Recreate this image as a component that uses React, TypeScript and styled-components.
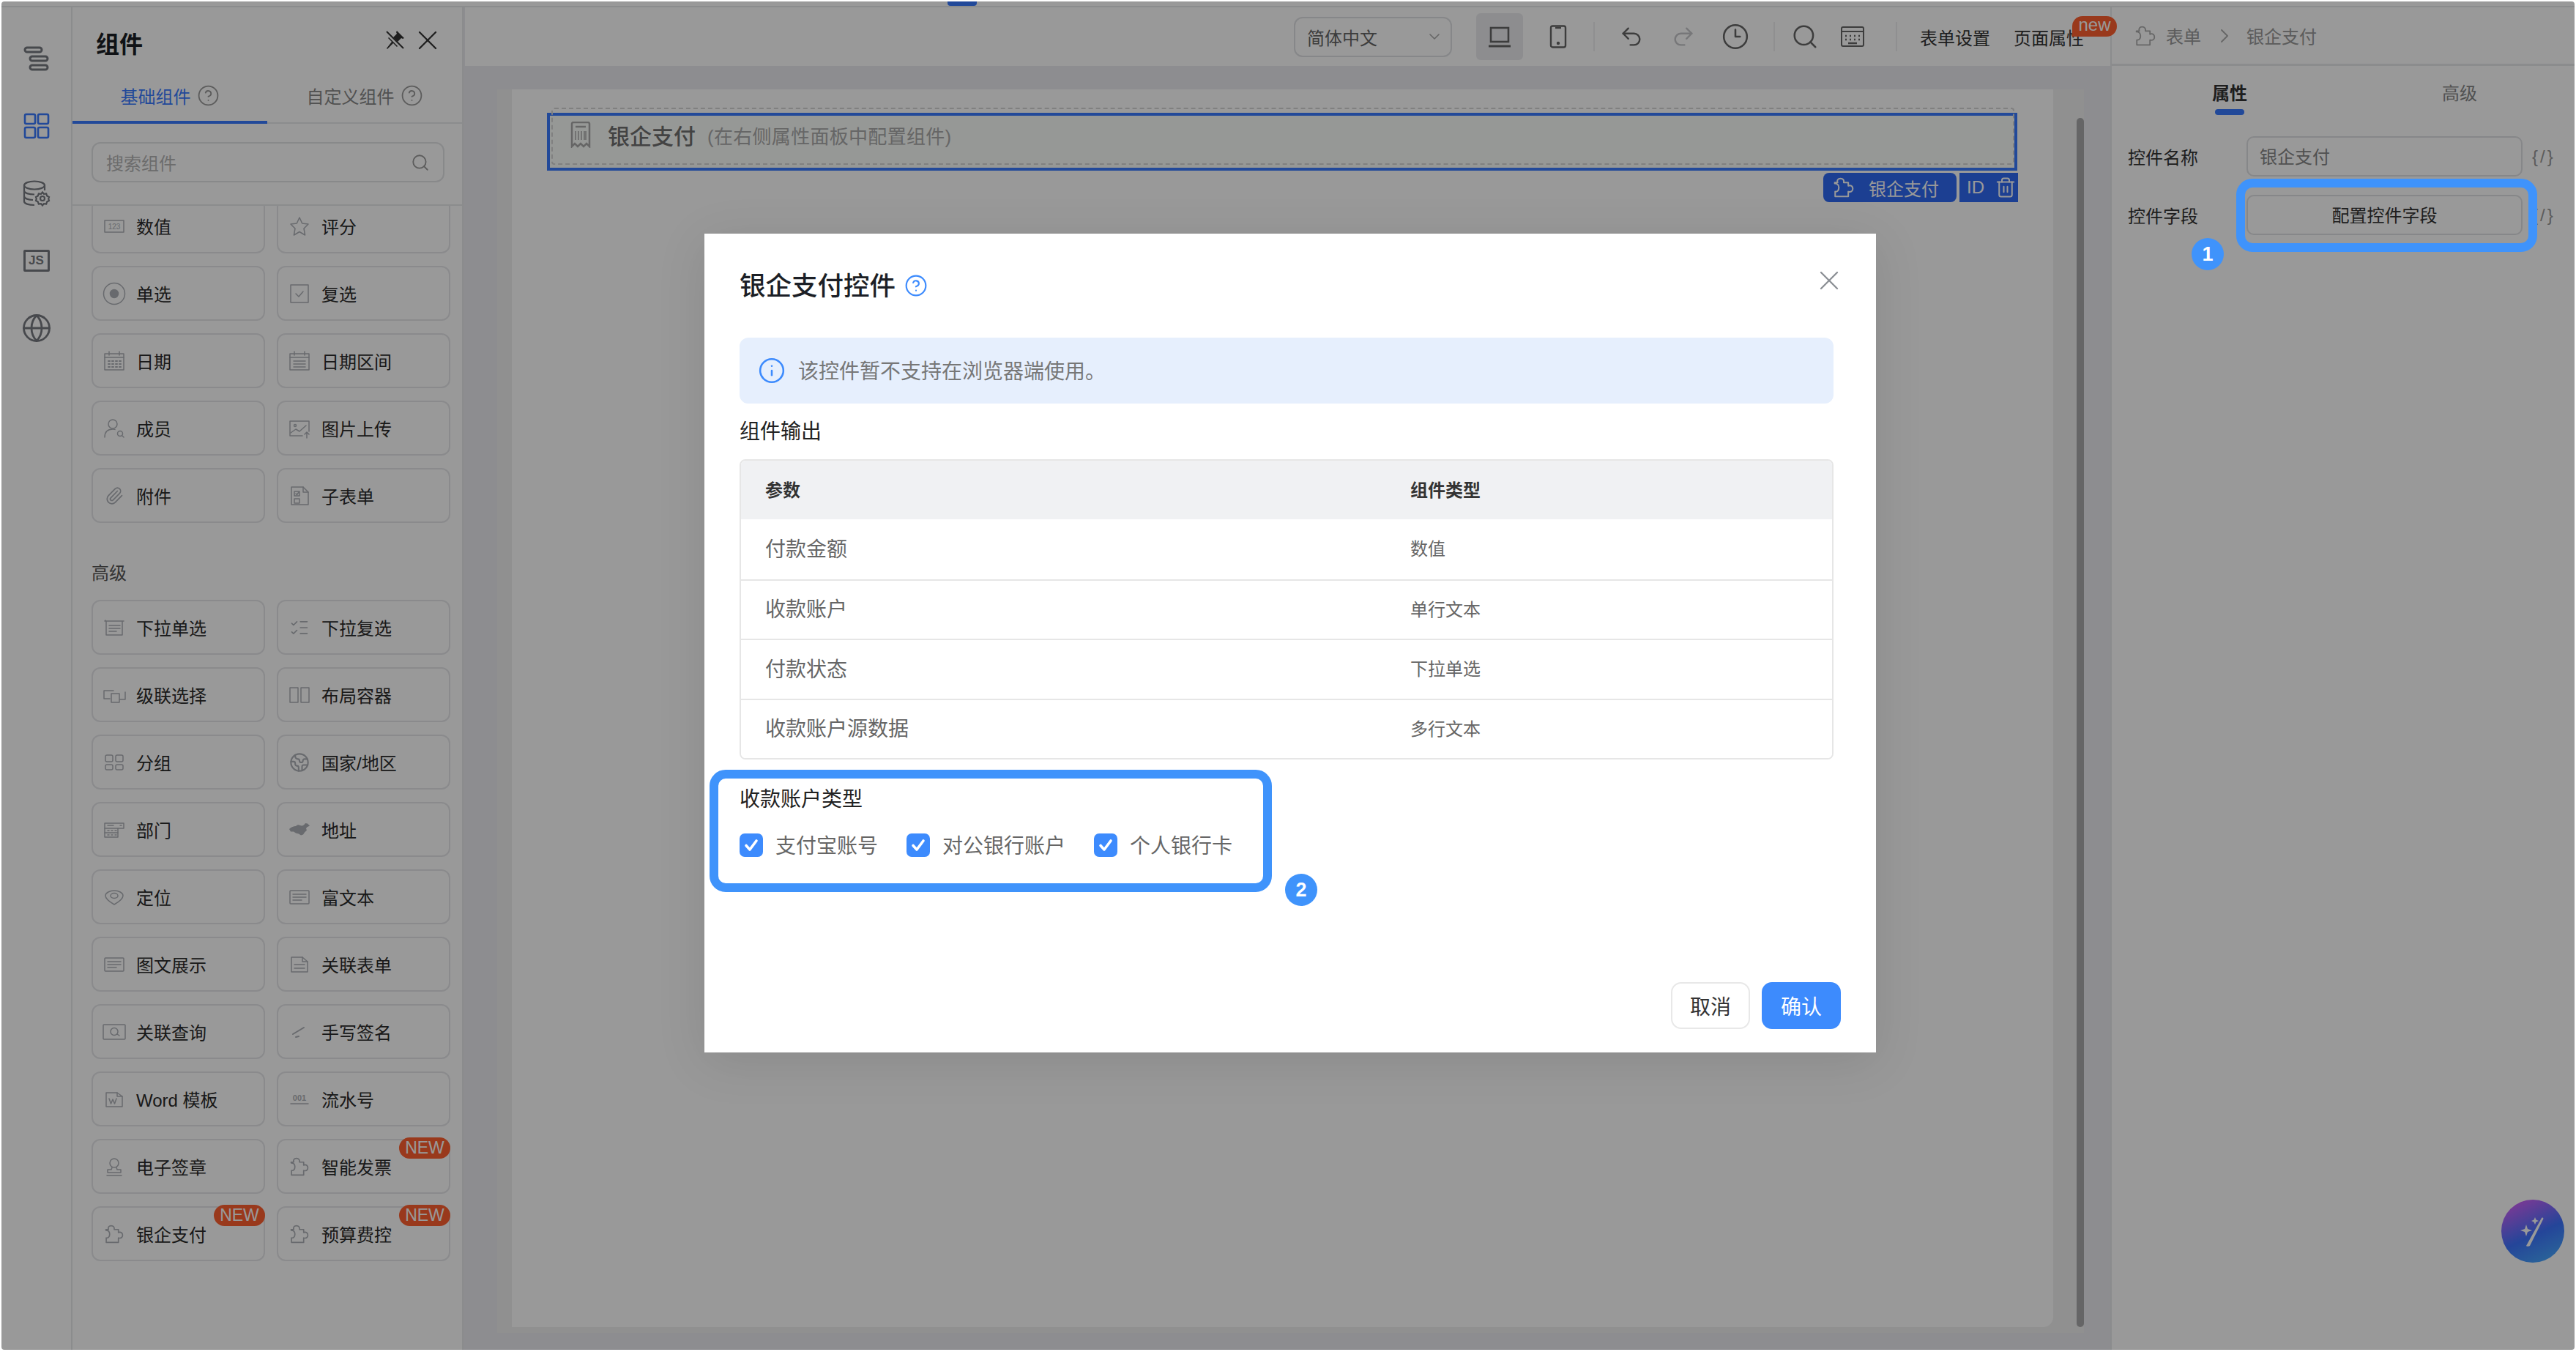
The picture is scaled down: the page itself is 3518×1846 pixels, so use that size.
import React from 'react';
import styled, { createGlobalStyle } from 'styled-components';
import {
  ChevronDown,
  ChevronRight,
  CircleHelp,
  Clock3,
  Earth,
  Globe,
  Info,
  ListChecks,
  Paperclip,
  Redo2,
  Search,
  Trash2,
  Undo2,
  X,
} from 'lucide-react';

const GlobalStyle = createGlobalStyle`
  html, body {
    margin: 0;
    padding: 0;
    background: #fff;
    overflow: hidden;
  }
  * {
    box-sizing: border-box;
  }
  body {
    font-family: "Liberation Sans", "Noto Sans CJK SC", sans-serif;
    color: #333;
  }
`;

const Page = styled.div`
  position: relative;
  width: 3518px;
  height: 1846px;
  padding: 2px 2px 3px 2px;
  overflow: hidden;
`;

const Frame = styled.div`
  display: flex;
  flex-direction: column;
  height: 100%;
  background: #fff;
`;

const TopStrip = styled.div`
  position: relative;
  flex: none;
  height: 8px;
  border-bottom: 2px solid #e8e9ec;
  display: flex;
  justify-content: flex-start;
`;

const StripTab = styled.div`
  width: 40px;
  height: 6px;
  margin-left: 1292px;
  border-radius: 0 0 4px 4px;
  background: #3a7aff;
`;

const Body = styled.div`
  flex: 1;
  min-height: 0;
  display: flex;
`;

/* left rail */
const Rail = styled.nav`
  flex: none;
  width: 97px;
  border-right: 2px solid #e8e9ec;
  display: flex;
  flex-direction: column;
  align-items: center;
  padding-top: 51px;
  gap: 54px;
  color: #6c6f75;
`;

const RailSlot = styled.div<{ $active?: boolean }>`
  width: 38px;
  height: 38px;
  display: flex;
  align-items: center;
  justify-content: center;
  color: ${(p) => (p.$active ? '#3a7aff' : '#777a80')};
`;

const JsBox = styled.div`
  flex: none;
  width: 36px;
  height: 30px;
  border: 3px solid #777a80;
  border-radius: 2px;
  font-size: 17px;
  font-weight: 700;
  line-height: 24px;
  text-align: center;
`;

/* components panel */
const Panel = styled.aside`
  flex: none;
  width: 534px;
  border-right: 2px solid #e8e9ec;
  display: flex;
  flex-direction: column;
  overflow: hidden;
`;

const PanelHead = styled.header`
  flex: none;
  height: 78px;
  display: flex;
  align-items: center;
  padding: 18px 25px 0 32px;
`;

const PanelTitle = styled.h2`
  margin: 0;
  flex: 1;
  font-size: 32px;
  font-weight: 700;
  color: #1c1f26;
`;

const HeadActions = styled.div`
  display: flex;
  align-items: center;
  gap: 9px;
  color: #333;
  margin-top: -6px;
`;

const PanelTabs = styled.div`
  flex: none;
  height: 81px;
  display: flex;
  padding-top: 7px;
  border-bottom: 2px solid #e8e9ec;
`;

const PanelTab = styled.div<{ $active?: boolean }>`
  flex: 0 0 266px;
  display: flex;
  align-items: center;
  justify-content: center;
  gap: 8px;
  margin-bottom: -2px;
  font-size: 24px;
  color: ${(p) => (p.$active ? '#3a7aff' : '#888')};
  border-bottom: 4px solid ${(p) => (p.$active ? '#3a7aff' : 'transparent')};
  svg {
    color: #999;
  }
`;

const SearchWrap = styled.div`
  flex: none;
  height: 112px;
  padding: 25px 24px 0 26px;
  border-bottom: 2px solid #e8e9ec;
`;

const SearchBox = styled.div`
  height: 55px;
  border: 2px solid #e3e4e7;
  border-radius: 12px;
  display: flex;
  align-items: center;
  justify-content: space-between;
  padding: 0 18px;
  font-size: 24px;
  color: #b5b5b5;
  svg {
    color: #999;
  }
`;

const PanelScroll = styled.div`
  flex: 1;
  min-height: 0;
  overflow: hidden;
  padding: 0 16px 0 26px;
`;

const ItemGrid = styled.div<{ $cropped?: boolean }>`
  display: grid;
  grid-template-columns: 237px 237px;
  grid-auto-rows: 75px;
  column-gap: 16px;
  row-gap: 17px;
  margin-top: ${(p) => (p.$cropped ? '-10px' : '0')};
`;

const SectionLabel = styled.div`
  font-size: 24px;
  line-height: 34px;
  color: #555;
  margin: 52px 0 19px;
`;

const Item = styled.div`
  position: relative;
  display: flex;
  align-items: center;
  border: 2px solid #e6e7ea;
  border-radius: 12px;
  padding-left: 15px;
  font-size: 24px;
  color: #2a2a2a;
  white-space: nowrap;
`;

const ItemIconSlot = styled.span`
  flex: none;
  width: 28px;
  height: 28px;
  margin-right: 16px;
  color: #aeb1b7;
  display: flex;
  align-items: center;
  justify-content: center;
`;

const NewBadge = styled.span`
  position: absolute;
  top: -4px;
  right: -2px;
  width: 70px;
  height: 29px;
  border-radius: 15px;
  background: #ff6030;
  color: #fff;
  font-size: 23px;
  line-height: 29px;
  text-align: center;
`;

const Glyph = styled.svg`
  width: 28px;
  height: 28px;
  fill: none;
  stroke: currentColor;
  stroke-width: 1.5;
  stroke-linecap: round;
  stroke-linejoin: round;
`;

/* center */
const Center = styled.main`
  flex: 1;
  min-width: 0;
  display: flex;
  flex-direction: column;
  background: #ebecf0;
  padding-left: 2px;
`;

const Toolbar = styled.div`
  flex: none;
  height: 80px;
  background: #fff;
  display: flex;
  align-items: center;
  justify-content: flex-end;
  padding-right: 36px;
`;

const LangSelect = styled.div`
  width: 216px;
  height: 55px;
  margin-right: 33px;
  border: 2px solid #e0e1e4;
  border-radius: 12px;
  display: flex;
  align-items: center;
  justify-content: space-between;
  padding: 0 10px 0 16px;
  font-size: 24px;
  color: #666;
  svg {
    color: #aaa;
  }
`;

const ToolGroup = styled.div<{ $gap: number }>`
  display: flex;
  align-items: center;
  gap: ${(p) => p.$gap}px;
`;

const ToolSlot = styled.div<{ $active?: boolean; $muted?: boolean }>`
  width: ${(p) => (p.$active ? '64px' : '40px')};
  height: 64px;
  border-radius: 6px;
  background: ${(p) => (p.$active ? '#ebecef' : 'transparent')};
  display: flex;
  align-items: center;
  justify-content: center;
  color: ${(p) => (p.$muted ? '#c6c7ca' : '#666')};
`;

const ToolSep = styled.div<{ $before: number; $after: number }>`
  width: 2px;
  height: 40px;
  margin: 0 ${(p) => p.$after}px 0 ${(p) => p.$before}px;
  background: #eeeef0;
`;

const ToolText = styled.span`
  position: relative;
  font-size: 24px;
  color: #333;
  white-space: nowrap;
  & + & {
    margin-left: 32px;
  }
`;

const TinyBadge = styled.span`
  position: absolute;
  top: -11px;
  left: 80px;
  width: 61px;
  height: 28px;
  border-radius: 14px 14px 14px 0;
  background: #ff6030;
  color: #fff;
  font-size: 24px;
  line-height: 24px;
  text-align: center;
`;

const Canvas = styled.div`
  position: relative;
  flex: 1;
  min-height: 0;
  padding: 32px 36px 0 44px;
`;

const Stage = styled.div`
  position: relative;
  height: 1698px;
  background: #f0f0f0;
  padding: 0 42px 8px 20px;
`;

const Sheet = styled.div`
  height: 100%;
  background: #fff;
  border-radius: 0 0 14px 0;
  padding: 32px 49px 0 48px;
`;

const Scrollbar = styled.div`
  position: absolute;
  top: 39px;
  right: 0;
  bottom: 8px;
  width: 10px;
  border-radius: 5px;
  background: #a9a9ab;
`;

const FieldBox = styled.div`
  position: relative;
  height: 79px;
  border: 4px solid #3a7aff;
  background: #fafdfa;
  display: flex;
  align-items: center;
  padding: 0 0 19px 28px;
  &::before {
    content: '';
    position: absolute;
    top: -11px;
    left: 2px;
    right: 0;
    bottom: 4px;
    border: 2px dashed #d6d6d6;
    border-radius: 4px;
    pointer-events: none;
  }
`;

const FieldTitle = styled.span`
  margin-left: 23px;
  font-size: 30px;
  font-weight: 500;
  color: #717171;
`;

const FieldHint = styled.span`
  margin-left: 16px;
  font-size: 26px;
  letter-spacing: 0.3px;
  color: #aaa;
`;

const FieldTags = styled.div`
  position: absolute;
  top: calc(100% + 7px);
  right: -5px;
  display: flex;
  gap: 4px;
`;

const FieldTag = styled.div<{ $rounded?: boolean }>`
  width: ${(p) => (p.$rounded ? '182px' : '80px')};
  height: 40px;
  padding-left: ${(p) => (p.$rounded ? '14px' : '10px')};
  display: flex;
  align-items: center;
  gap: ${(p) => (p.$rounded ? '20px' : '14px')};
  background: #2f69f3;
  border-radius: ${(p) => (p.$rounded ? '8px' : '0')};
  color: #fff;
  font-size: 24px;
`;

/* right panel */
const Inspector = styled.aside`
  flex: none;
  width: 634px;
  border-left: 2px solid #e8e9ec;
  display: flex;
  flex-direction: column;
`;

const Crumbs = styled.div`
  flex: none;
  height: 80px;
  border-bottom: 3px solid #e8e9ec;
  display: flex;
  align-items: center;
  padding-left: 32px;
  font-size: 24px;
  color: #999;
  svg {
    color: #aaa;
  }
`;

const CrumbText = styled.span<{ $gap: number }>`
  margin-left: ${(p) => p.$gap}px;
  margin-right: ${(p) => p.$gap + 2}px;
  &:last-child {
    margin-right: 0;
  }
`;

const InspectorTabs = styled.div`
  flex: none;
  height: 74px;
  display: flex;
  padding-left: 4px;
`;

const InspectorTab = styled.div<{ $active?: boolean }>`
  flex: 1;
  display: flex;
  flex-direction: column;
  align-items: center;
  padding-top: 23px;
  font-size: 24px;
  line-height: 30px;
  font-weight: ${(p) => (p.$active ? 700 : 400)};
  color: ${(p) => (p.$active ? '#333' : '#888')};
  &::after {
    content: '';
    display: ${(p) => (p.$active ? 'block' : 'none')};
    width: 40px;
    height: 8px;
    margin-top: 6px;
    border-radius: 4px;
    background: #3a7aff;
  }
`;

const PropList = styled.div`
  display: flex;
  flex-direction: column;
  gap: 25px;
  padding: 22px 0 0 22px;
`;

const PropRow = styled.div`
  display: flex;
  align-items: center;
  font-size: 24px;
  color: #333;
`;

const PropLabel = styled.span`
  flex: none;
  width: 162px;
`;

const PropInput = styled.div<{ $button?: boolean }>`
  width: 377px;
  height: 55px;
  border: 2px solid #e0e1e4;
  border-radius: 10px;
  display: flex;
  align-items: center;
  justify-content: ${(p) => (p.$button ? 'center' : 'flex-start')};
  padding: 0 0 2px ${(p) => (p.$button ? '0' : '16px')};
  color: ${(p) => (p.$button ? '#333' : '#888')};
`;

const CodeMark = styled.span`
  margin-left: 13px;
  color: #999;
  letter-spacing: 3px;
`;

const AiButton = styled.div`
  position: absolute;
  right: 16px;
  bottom: 122px;
  width: 86px;
  height: 86px;
  border-radius: 50%;
  background: linear-gradient(155deg, #d05ff8 8%, #3d74ff 55%, #49b4ff 100%);
  display: flex;
  align-items: center;
  justify-content: center;
`;

/* modal */
const Overlay = styled.div`
  position: absolute;
  inset: 2px 2px 3px 2px;
  border-radius: 4px;
  background: rgba(0, 0, 0, 0.4);
  padding: 317px 0 0 960px;
`;

const Modal = styled.section`
  width: 1600px;
  height: 1118px;
  background: #fff;
  padding: 48px 58px 32px 48px;
  display: flex;
  flex-direction: column;
  position: relative;
  box-shadow: 0 12px 64px rgba(0, 0, 0, 0.1);
`;

const ModalTitle = styled.h3`
  margin: 0;
  height: 44px;
  display: flex;
  align-items: center;
  gap: 12px;
  padding-bottom: 3px;
  font-size: 35.5px;
  font-weight: 500;
  color: #1c1f26;
  svg {
    color: #3d8bfd;
    margin-top: 5px;
  }
`;

const ModalClose = styled.button`
  position: absolute;
  top: 42px;
  right: 42px;
  padding: 0;
  border: 0;
  background: none;
  color: #8b8f94;
  display: flex;
`;

const Alert = styled.div`
  flex: none;
  height: 90px;
  margin-top: 50px;
  padding: 0 0 3px 25px;
  border-radius: 12px;
  background: #e6effd;
  display: flex;
  align-items: center;
  gap: 17px;
  font-size: 28px;
  color: #777;
  svg {
    color: #3d8bfd;
    margin-top: 3px;
  }
`;

const ModalLabel = styled.div<{ $top: number }>`
  height: 40px;
  margin-top: ${(p) => p.$top}px;
  font-size: 28px;
  line-height: 40px;
  color: #222;
`;

const Table = styled.div`
  margin-top: 17px;
  border: 2px solid #e6e6e6;
  border-radius: 8px;
  overflow: hidden;
`;

const TableRow = styled.div<{ $head?: boolean }>`
  height: ${(p) => (p.$head ? '80px' : '81.5px')};
  display: grid;
  grid-template-columns: 881px 1fr;
  align-items: center;
  padding: 0 0 4px 33px;
  background: ${(p) => (p.$head ? '#f0f1f3' : '#fff')};
  border-top: ${(p) => (p.$head ? '0' : '2px solid #e6e6e6')};
  &:nth-child(2) {
    border-top: 0;
  }
`;

const Cell = styled.span<{ $type?: boolean; $head?: boolean }>`
  font-size: ${(p) => (p.$type || p.$head ? '24px' : '28px')};
  font-weight: ${(p) => (p.$head ? 600 : 400)};
  color: ${(p) => (p.$head ? '#333' : '#666')};
`;

const CheckRow = styled.div`
  display: flex;
  gap: 39px;
  margin-top: 26px;
`;

const CheckOption = styled.label`
  display: flex;
  align-items: center;
  gap: 17px;
  height: 32px;
  font-size: 28px;
  color: #666;
  & > span:last-child {
    margin-top: -3px;
  }
`;

const CheckBox = styled.span`
  width: 32px;
  height: 32px;
  border-radius: 7px;
  background: #3d8bfd;
  display: flex;
  align-items: center;
  justify-content: center;
`;

const ModalFooter = styled.footer`
  margin: auto -10px 0 0;
  display: flex;
  justify-content: flex-end;
  gap: 16px;
`;

const ModalButton = styled.button<{ $primary?: boolean }>`
  width: 108px;
  height: 64px;
  padding: 0;
  border-radius: 14px;
  border: 2px solid ${(p) => (p.$primary ? '#3d8bfd' : '#e8e8e8')};
  background: ${(p) => (p.$primary ? '#3d8bfd' : '#fff')};
  color: ${(p) => (p.$primary ? '#fff' : '#333')};
  font-family: inherit;
  font-size: 28px;
`;

/* marks drawn over the screenshot */
const MarkBox = styled.div<{ $x: number; $y: number; $w: number; $h: number }>`
  position: absolute;
  left: ${(p) => p.$x}px;
  top: ${(p) => p.$y}px;
  width: ${(p) => p.$w}px;
  height: ${(p) => p.$h}px;
  border: 12px solid #3f93fb;
  border-radius: 22px;
`;

const MarkDot = styled.div<{ $x: number; $y: number }>`
  position: absolute;
  left: ${(p) => p.$x - 22}px;
  top: ${(p) => p.$y - 22}px;
  width: 44px;
  height: 44px;
  border-radius: 50%;
  background: #3f93fb;
  color: #fff;
  font-size: 27px;
  font-weight: 700;
  line-height: 44px;
  text-align: center;
`;

const PuzzleIcon = ({ size = 26, width = 1.6 }: { size?: number; width?: number }) => (
  <svg width={size} height={size} viewBox="0 0 25 24" fill="none" stroke="currentColor" strokeWidth={width} strokeLinejoin="round">
    <path d="M1.500 6H5C4 3 5.500 1 8.500 1S13 3 12.500 6H18V10C21 8.500 23.500 10.500 23.500 13.500S21 18 18 17V23H2V17C5 17.500 6.500 15 6.500 12S4.500 7 1.500 7Z" />
  </svg>
);

const TreeIcon = () => (
  <svg width="36" height="34" viewBox="0 0 36 34" fill="none" stroke="currentColor" strokeWidth="3">
    <rect x="2" y="2" width="23" height="6" rx="3" />
    <rect x="9" y="14" width="24" height="6" rx="3" />
    <rect x="9" y="26" width="24" height="6" rx="3" />
  </svg>
);

const GridIcon = () => (
  <svg width="36" height="36" viewBox="0 0 36 36" fill="none" stroke="currentColor" strokeWidth="2.6">
    <rect x="2" y="2" width="14" height="13" rx="2" />
    <rect x="20" y="2" width="14" height="13" rx="2" />
    <rect x="2" y="20" width="14" height="14" rx="2" />
    <rect x="20" y="20" width="14" height="14" rx="2" />
  </svg>
);

const DataIcon = () => (
  <svg width="38" height="36" viewBox="0 0 38 36" fill="none" stroke="currentColor" strokeWidth="2.2">
    <ellipse cx="16" cy="7" rx="14" ry="5.5" />
    <path d="M2 7v22c0 3 6 5 14 5" />
    <path d="M30 7v7" />
    <path d="M2 14.5c0 3 6 5 14 5" />
    <path d="M2 22c0 3 6 5 12 5" />
    <circle cx="27" cy="25" r="3" />
    <path d="M27 16.5l2 2.4 3.2-.4 1 3 2.8 1.500-.8 2.500.8 2.500-2.800 1.500-1 3-3.200-.4-2 2.400-2-2.400-3.200.4-1-3-2.800-1.500.8-2.500-.8-2.500 2.800-1.500 1-3 3.200.4z" />
  </svg>
);

const PinOffIcon = () => (
  <svg width="28" height="28" viewBox="0 0 28 28">
    <path d="M17 1l10 10-2 1-2-1-5 5 1 5-2 2-5-5-8 8-1-1 7-9-5-5 2-2 5 1 5-5-1-2z" fill="currentColor" />
    <path d="M2 3l23 23" stroke="#fff" strokeWidth="4" />
    <path d="M3 2l23 23" stroke="currentColor" strokeWidth="2" />
  </svg>
);

const LaptopIcon = () => (
  <svg width="32" height="32" viewBox="0 0 32 32" fill="none" stroke="currentColor" strokeWidth="2.6">
    <rect x="4" y="4" width="24" height="19" />
    <path d="M1 29h30" strokeWidth="3" />
  </svg>
);

const PhoneIcon = () => (
  <svg width="24" height="32" viewBox="0 0 24 32" fill="none" stroke="currentColor" strokeWidth="2.400">
    <rect x="2" y="1.500" width="20" height="29" rx="2.500" />
    <circle cx="12" cy="25" r="1" fill="currentColor" />
    <path d="M8 4h8" />
  </svg>
);

const KeyboardIcon = () => (
  <svg width="32" height="28" viewBox="0 0 32 28" fill="none" stroke="currentColor" strokeWidth="2">
    <rect x="1" y="1" width="30" height="26" rx="2" />
    <path d="M1 7h30" />
    <path d="M6 13h2M12 13h2M18 13h2M24 13h2M6 18h2M12 18h2M18 18h2M24 18h2M10 23h12" strokeWidth="2.400" />
  </svg>
);

const ReceiptIcon = () => (
  <svg width="28" height="36" viewBox="0 0 28 36" fill="none" stroke="#aaa" strokeWidth="2.500">
    <path d="M2 3c0-1 1-2 2-2h20c1 0 2 1 2 2v31l-4-4-4 4-4-4-4 4-4-4-4 4z" />
    <path d="M7 7h14" />
    <path d="M7 13v12M11 13v12M15 13v12M19 13v12M21 13v12" strokeWidth="1.500" />
  </svg>
);

const WandIcon = () => (
  <svg width="48" height="48" viewBox="0 0 48 48" fill="#fff">
    <path d="M36 6c2-1 3 0 2 2L20 44c-1 1-5 1-5 0z" />
    <path d="M15 15l2 6 6 2-6 2-2 6-2-6-6-2 6-2z" />
    <path d="M27 5l1.500 3.500 3.500 1.500-3.500 1.500L27 15l-1.500-3.500L22 10l3.500-1.500z" />
  </svg>
);

const CheckMark = () => (
  <svg width="22" height="22" viewBox="0 0 22 22" fill="none" stroke="#fff" strokeWidth="3.600" strokeLinecap="round" strokeLinejoin="round">
    <path d="M4 11.500l5 5.500 9-12" />
  </svg>
);

const itemIcons: Record<string, React.ReactNode> = {
  num: (
    <Glyph viewBox="0 0 28 28">
      <rect x="1" y="6" width="26" height="16" />
      <text x="14" y="18" fontSize="10" textAnchor="middle" fill="currentColor" stroke="none">123</text>
    </Glyph>
  ),
  star: (
    <Glyph viewBox="0 0 28 28">
      <path d="M14 2l3.700 8 8.300 1-6 6 1.600 9L14 21.500 6.400 26 8 17l-6-6 8.300-1z" />
    </Glyph>
  ),
  radio: (
    <Glyph viewBox="0 0 32 32" style={{ width: 32, height: 32, flex: 'none' }}>
      <circle cx="16" cy="16" r="14.500" />
      <circle cx="16" cy="16" r="5.500" fill="currentColor" />
    </Glyph>
  ),
  check: (
    <Glyph viewBox="0 0 28 28">
      <rect x="2" y="2" width="24" height="24" />
      <path d="M9 14l4 4 6-7" />
    </Glyph>
  ),
  date: (
    <Glyph viewBox="0 0 28 28">
      <rect x="1" y="4" width="26" height="22" />
      <path d="M1 9h26M7 1v5M21 1v5" />
      <path d="M6 14h2M11 14h2M16 14h2M21 14h2M6 18h2M11 18h2M16 18h2M21 18h2M6 22h2M11 22h2M16 22h2M21 22h2" strokeWidth="2" />
    </Glyph>
  ),
  range: (
    <Glyph viewBox="0 0 28 28">
      <rect x="1" y="4" width="26" height="22" />
      <path d="M7 1v5M21 1v5M1 9h26M6 14h16M6 18h16M6 22h16" />
    </Glyph>
  ),
  member: (
    <Glyph viewBox="0 0 28 28">
      <circle cx="12" cy="8" r="6" />
      <path d="M1 26c0-7 4-11 11-11 1 0 2 0 3 .4" />
      <circle cx="22" cy="21" r="3.500" />
      <path d="M25 24l2 2" />
    </Glyph>
  ),
  image: (
    <Glyph viewBox="0 0 28 28">
      <path d="M18 24H1V4h26v14" />
      <circle cx="8" cy="10" r="1.500" />
      <path d="M2 20l7-5 5 3 9-8" />
      <path d="M24 27v-7M21 22l3-3 3 3" />
    </Glyph>
  ),
  attach: <Paperclip size={26} strokeWidth={1.6} />,
  sub: (
    <Glyph viewBox="0 0 28 28">
      <path d="M3 2h16l7 7v17H3z" />
      <path d="M19 2v7h7" />
      <path d="M7 8h7v6H7zM7 18h7v6H7z" />
      <path d="M9 11l1.500 1.500L13 9" />
    </Glyph>
  ),
  select: (
    <Glyph viewBox="0 0 28 28">
      <path d="M1 5h26M3 5v19h22V5M1 5l1-1M7 11h15M7 15h15M7 19h10" />
    </Glyph>
  ),
  multi: <ListChecks size={28} strokeWidth={1.4} />,
  cascade: (
    <Glyph viewBox="0 0 32 28" style={{ width: 32, flex: 'none' }}>
      <path d="M10 19H2V8h13" />
      <path d="M12 24V12h11v12zM23 20h8V10" />
    </Glyph>
  ),
  layout: (
    <Glyph viewBox="0 0 28 28">
      <rect x="1" y="4" width="11" height="20" />
      <rect x="16" y="4" width="11" height="20" />
    </Glyph>
  ),
  group: (
    <Glyph viewBox="0 0 28 28">
      <rect x="2" y="4" width="10" height="9" rx="2" />
      <rect x="16" y="4" width="10" height="9" rx="2" />
      <rect x="2" y="17" width="10" height="7" rx="2" />
      <rect x="16" y="17" width="10" height="7" rx="2" />
    </Glyph>
  ),
  earth: <Earth size={30} strokeWidth={1.8} />,
  dept: (
    <Glyph viewBox="0 0 28 28">
      <path d="M1 5h26v7h-8v12H1z" />
      <path d="M1 12h18M1 18h18M5 8h8M5 15h2M10 15h2M15 15h2M5 21h2M10 21h2M15 21h2M22 8h2" />
    </Glyph>
  ),
  address: (
    <svg width="30" height="28" viewBox="0 0 30 28" fill="currentColor" style={{ flex: 'none' }}>
      <path d="M1 13c3-3 6-4 9-4 2-2 4-2 6-1 3 1 5 0 7-3l3 .5 3 3-4 2-1 2 1 2-3 3-2 3-3 1-3-2-4-1-3-2-4 0z" />
    </svg>
  ),
  location: (
    <Glyph viewBox="0 0 28 28">
      <path d="M14 24C7 20 2 16 2 12c0-4 6-7 12-7s12 3 12 7c0 4-5 8-12 12z" />
      <ellipse cx="14" cy="12" rx="5" ry="3.500" />
    </Glyph>
  ),
  rich: (
    <Glyph viewBox="0 0 28 28">
      <rect x="1" y="5" width="26" height="18" rx="1" />
      <path d="M5 10h18M5 14h18M5 18h12" />
    </Glyph>
  ),
  link: (
    <Glyph viewBox="0 0 28 28">
      <path d="M3 4h15l7 6v14H3z" />
      <path d="M18 4v6h7M7 14h14M7 19h14" />
    </Glyph>
  ),
  query: (
    <Glyph viewBox="0 0 32 28" style={{ width: 32, flex: 'none' }} strokeWidth="2.200">
      <rect x="1" y="4" width="30" height="20" rx="1" />
      <circle cx="16" cy="13.500" r="5" />
      <path d="M20 17l3 2" />
    </Glyph>
  ),
  sign: (
    <Glyph viewBox="0 0 28 28">
      <path d="M5 17L20 8M9 21l4-1" strokeWidth="2" />
    </Glyph>
  ),
  word: (
    <Glyph viewBox="0 0 28 28">
      <path d="M3 5h15l7 5v14H3z" />
      <path d="M18 5v5h7" />
      <path d="M7 13l2.500 7L12 14l2.500 6L17 13" />
    </Glyph>
  ),
  serial: (
    <Glyph viewBox="0 0 28 28">
      <text x="14" y="16" fontSize="11" fontWeight="700" textAnchor="middle" fill="currentColor" stroke="none">001</text>
      <path d="M2 20h24" />
    </Glyph>
  ),
  seal: (
    <Glyph viewBox="0 0 28 28">
      <circle cx="14" cy="9" r="6" />
      <path d="M11 15l-1 3H5v4h18v-4h-5l-1-3M4 26h20" />
    </Glyph>
  ),
  puzzle: <PuzzleIcon />,
};

type ItemDef = { label: string; icon: string; isNew?: boolean };

const basicItems: ItemDef[] = [
  { label: '数值', icon: 'num' },
  { label: '评分', icon: 'star' },
  { label: '单选', icon: 'radio' },
  { label: '复选', icon: 'check' },
  { label: '日期', icon: 'date' },
  { label: '日期区间', icon: 'range' },
  { label: '成员', icon: 'member' },
  { label: '图片上传', icon: 'image' },
  { label: '附件', icon: 'attach' },
  { label: '子表单', icon: 'sub' },
];

const advancedItems: ItemDef[] = [
  { label: '下拉单选', icon: 'select' },
  { label: '下拉复选', icon: 'multi' },
  { label: '级联选择', icon: 'cascade' },
  { label: '布局容器', icon: 'layout' },
  { label: '分组', icon: 'group' },
  { label: '国家/地区', icon: 'earth' },
  { label: '部门', icon: 'dept' },
  { label: '地址', icon: 'address' },
  { label: '定位', icon: 'location' },
  { label: '富文本', icon: 'rich' },
  { label: '图文展示', icon: 'rich' },
  { label: '关联表单', icon: 'link' },
  { label: '关联查询', icon: 'query' },
  { label: '手写签名', icon: 'sign' },
  { label: 'Word 模板', icon: 'word' },
  { label: '流水号', icon: 'serial' },
  { label: '电子签章', icon: 'seal' },
  { label: '智能发票', icon: 'puzzle', isNew: true },
  { label: '银企支付', icon: 'puzzle', isNew: true },
  { label: '预算费控', icon: 'puzzle', isNew: true },
];

const outputs = [
  ['付款金额', '数值'],
  ['收款账户', '单行文本'],
  ['付款状态', '下拉单选'],
  ['收款账户源数据', '多行文本'],
];

const accountTypes = ['支付宝账号', '对公银行账户', '个人银行卡'];

const renderItem = (item: ItemDef) => (
  <Item key={item.label}>
    <ItemIconSlot>{itemIcons[item.icon]}</ItemIconSlot>
    {item.label}
    {item.isNew && <NewBadge>NEW</NewBadge>}
  </Item>
);

const App: React.FC = () => (
  <Page>
    <GlobalStyle />
    <Frame>
      <TopStrip>
        <StripTab />
      </TopStrip>
      <Body>
        <Rail>
          <RailSlot><TreeIcon /></RailSlot>
          <RailSlot $active><GridIcon /></RailSlot>
          <RailSlot><DataIcon /></RailSlot>
          <RailSlot><JsBox>JS</JsBox></RailSlot>
          <RailSlot><Globe size={42} strokeWidth={1.6} style={{ flex: 'none' }} /></RailSlot>
        </Rail>

        <Panel>
          <PanelHead>
            <PanelTitle>组件</PanelTitle>
            <HeadActions>
              <PinOffIcon />
              <X size={44} strokeWidth={1.3} />
            </HeadActions>
          </PanelHead>
          <PanelTabs>
            <PanelTab $active>基础组件 <CircleHelp size={31} strokeWidth={1.4} /></PanelTab>
            <PanelTab>自定义组件 <CircleHelp size={31} strokeWidth={1.4} /></PanelTab>
          </PanelTabs>
          <SearchWrap>
            <SearchBox>
              搜索组件
              <Search size={26} strokeWidth={1.7} />
            </SearchBox>
          </SearchWrap>
          <PanelScroll>
            <ItemGrid $cropped>{basicItems.map(renderItem)}</ItemGrid>
            <SectionLabel>高级</SectionLabel>
            <ItemGrid>{advancedItems.map(renderItem)}</ItemGrid>
          </PanelScroll>
        </Panel>

        <Center>
          <Toolbar>
            <LangSelect>
              简体中文
              <ChevronDown size={24} strokeWidth={1.6} />
            </LangSelect>
            <ToolGroup $gap={28}>
              <ToolSlot $active><LaptopIcon /></ToolSlot>
              <ToolSlot><PhoneIcon /></ToolSlot>
            </ToolGroup>
            <ToolSep $before={28} $after={30} />
            <ToolGroup $gap={31}>
              <ToolSlot><Undo2 size={34} strokeWidth={1.7} /></ToolSlot>
              <ToolSlot $muted><Redo2 size={34} strokeWidth={1.7} /></ToolSlot>
              <ToolSlot><Clock3 size={38} strokeWidth={1.6} style={{ flex: 'none' }} /></ToolSlot>
            </ToolGroup>
            <ToolSep $before={32} $after={21} />
            <ToolGroup $gap={25}>
              <ToolSlot><Search size={38} strokeWidth={1.6} style={{ flex: 'none' }} /></ToolSlot>
              <ToolSlot><KeyboardIcon /></ToolSlot>
            </ToolGroup>
            <ToolSep $before={39} $after={31} />
            <ToolText>表单设置</ToolText>
            <ToolText>
              页面属性
              <TinyBadge>new</TinyBadge>
            </ToolText>
          </Toolbar>
          <Canvas>
            <Stage>
              <Sheet>
                <FieldBox>
                  <ReceiptIcon />
                  <FieldTitle>银企支付</FieldTitle>
                  <FieldHint>(在右侧属性面板中配置组件)</FieldHint>
                  <FieldTags>
                    <FieldTag $rounded>
                      <PuzzleIcon size={28} width={1.8} />
                      银企支付
                    </FieldTag>
                    <FieldTag>
                      ID
                      <Trash2 size={30} strokeWidth={1.6} />
                    </FieldTag>
                  </FieldTags>
                </FieldBox>
              </Sheet>
              <Scrollbar />
            </Stage>
          </Canvas>
        </Center>

        <Inspector>
          <Crumbs>
            <PuzzleIcon size={28} />
            <CrumbText $gap={14}>表单</CrumbText>
            <ChevronRight size={32} strokeWidth={1.4} />
            <CrumbText $gap={14}>银企支付</CrumbText>
          </Crumbs>
          <InspectorTabs>
            <InspectorTab $active>属性</InspectorTab>
            <InspectorTab>高级</InspectorTab>
          </InspectorTabs>
          <PropList>
            <PropRow>
              <PropLabel>控件名称</PropLabel>
              <PropInput>银企支付</PropInput>
              <CodeMark>{'{/}'}</CodeMark>
            </PropRow>
            <PropRow>
              <PropLabel>控件字段</PropLabel>
              <PropInput $button>配置控件字段</PropInput>
              <CodeMark>{'{/}'}</CodeMark>
            </PropRow>
          </PropList>
        </Inspector>
      </Body>
    </Frame>

    <AiButton><WandIcon /></AiButton>

    <Overlay>
      <Modal>
        <ModalTitle>
          银企支付控件
          <CircleHelp size={32} strokeWidth={1.6} />
        </ModalTitle>
        <ModalClose><X size={44} strokeWidth={1.3} /></ModalClose>
        <Alert>
          <Info size={38} strokeWidth={1.6} />
          该控件暂不支持在浏览器端使用。
        </Alert>
        <ModalLabel $top={19}>组件输出</ModalLabel>
        <Table>
          <TableRow $head>
            <Cell $head>参数</Cell>
            <Cell $head>组件类型</Cell>
          </TableRow>
          {outputs.map(([name, type]) => (
            <TableRow key={name}>
              <Cell>{name}</Cell>
              <Cell $type>{type}</Cell>
            </TableRow>
          ))}
        </Table>
        <ModalLabel $top={35}>收款账户类型</ModalLabel>
        <CheckRow>
          {accountTypes.map((type) => (
            <CheckOption key={type}>
              <CheckBox><CheckMark /></CheckBox>
              <span>{type}</span>
            </CheckOption>
          ))}
        </CheckRow>
        <ModalFooter>
          <ModalButton>取消</ModalButton>
          <ModalButton $primary>确认</ModalButton>
        </ModalFooter>
      </Modal>
    </Overlay>

    <MarkBox $x={3054} $y={244} $w={411} $h={100} />
    <MarkDot $x={3015} $y={347}>1</MarkDot>
    <MarkBox $x={969} $y={1051} $w={768} $h={167} />
    <MarkDot $x={1777} $y={1215}>2</MarkDot>
  </Page>
);

export default App;
